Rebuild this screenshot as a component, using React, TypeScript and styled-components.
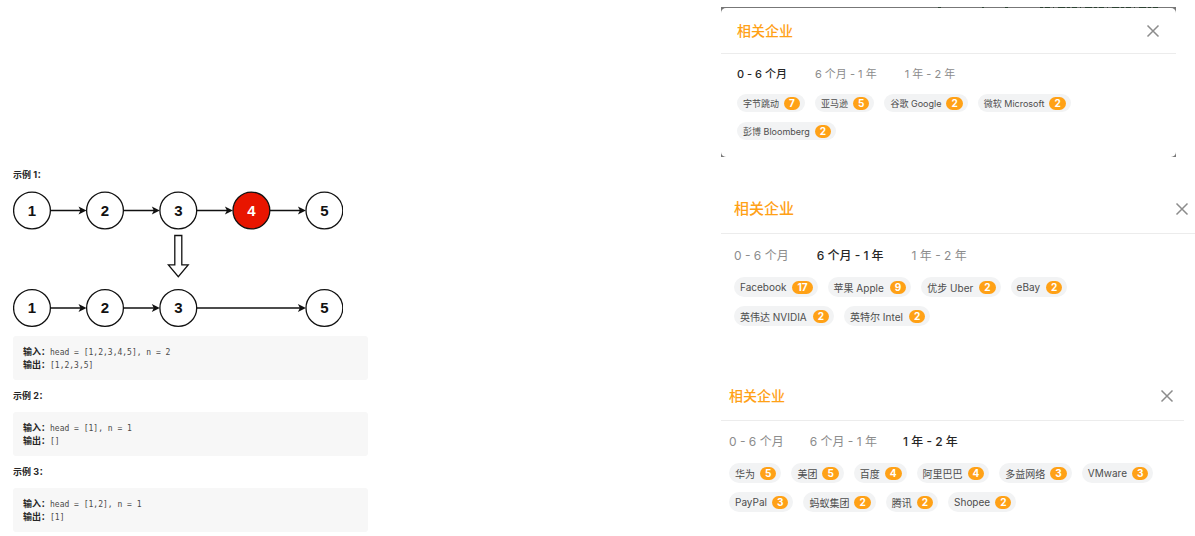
import React from "react";
import styled, { createGlobalStyle } from "styled-components";

const GlobalStyle = createGlobalStyle`
  * { box-sizing: border-box; }
  body {
    margin: 0;
    background: #fff;
    font-family: Inter, "Noto Sans CJK SC", sans-serif;
  }
  button { font: inherit; border: 0; background: none; padding: 0; cursor: pointer; }
`;

const Page = styled.main`
  display: flex;
  justify-content: space-between;
  align-items: flex-start;
`;

const Examples = styled.section`
  flex: 0 1 368px;
  padding: 168px 0 0 13px;
`;

const ExampleTitle = styled.h3`
  margin: 0;
  font-size: 9px;
  line-height: 14px;
  font-weight: 700;
  color: #262626;
`;

const Diagram = styled.svg`
  display: block;
  margin-top: 8px;
`;

const Code = styled.pre<{ $tight?: boolean }>`
  margin: ${(p) => (p.$tight ? "6px" : "9px")} 0 9px;
  padding: 10px 10px 8px;
  background: #f7f7f7;
  border-radius: 3px;
  color: #4a4a4a;
  font-family: "DejaVu Sans Mono", "Noto Sans CJK SC", monospace;
  font-size: 8px;
  line-height: 12px;
`;

const Label = styled.strong`
  font-family: "Noto Sans CJK SC", sans-serif;
  font-size: 9px;
  line-height: 12px;
  color: #262626;
`;

const Panels = styled.section`
  flex: 0 1 474px;
  padding-top: 7px;
`;

const Backdrop = styled.div`
  margin-right: 19px;
  background: #777;
`;

const Edge = styled.svg`
  display: block;
  width: 100%;
  height: 1px;
`;

const Panel = styled.article<{ $inset?: number; $top?: number; $card?: boolean }>`
  margin-right: ${(p) => p.$inset ?? 0}px;
  margin-top: ${(p) => p.$top ?? 0}px;
  background: #fff;
  border-radius: ${(p) => (p.$card ? "5px" : "0")};
  padding-bottom: ${(p) => (p.$card ? "17px" : "0")};
`;

const Header = styled.header<{ $left: number; $right: number; $height: number }>`
  display: flex;
  align-items: center;
  justify-content: space-between;
  height: ${(p) => p.$height}px;
  padding: 0 ${(p) => p.$right}px 0 ${(p) => p.$left}px;
  border-bottom: 1px solid #ececec;
`;

const Title = styled.h2<{ $size: number }>`
  margin: 0;
  font-size: ${(p) => p.$size}px;
  line-height: 20px;
  font-weight: 500;
  color: #ffa116;
`;

const Close = styled.button`
  display: flex;
  color: #8c8c8c;
`;

const Tabs = styled.nav<{ $left: number; $gap: number; $size: number; $top: number }>`
  display: flex;
  gap: ${(p) => p.$gap}px;
  padding: ${(p) => p.$top}px 0 0 ${(p) => p.$left}px;
  font-size: ${(p) => p.$size}px;
`;

const Tab = styled.button<{ $active: boolean }>`
  line-height: 18px;
  white-space: nowrap;
  color: ${(p) => (p.$active ? "#262626" : "#8c8c8c")};
  font-weight: ${(p) => (p.$active ? 500 : 400)};
`;

const Tags = styled.ul<{ $left: number; $gap: number; $top: number }>`
  display: flex;
  flex-wrap: wrap;
  gap: ${(p) => p.$gap}px 10px;
  list-style: none;
  margin: ${(p) => p.$top}px 0 0;
  padding: 0 24px 0 ${(p) => p.$left}px;
`;

const Tag = styled.li<{ $height: number; $size: number; $gap: number }>`
  display: flex;
  align-items: center;
  gap: ${(p) => p.$gap}px;
  height: ${(p) => p.$height}px;
  padding: 0 5px 0 6px;
  border-radius: 10px;
  background: #f2f3f4;
  color: #4d4d4d;
  font-size: ${(p) => p.$size}px;
  white-space: nowrap;
`;

const Count = styled.span`
  min-width: 16px;
  padding: 0 5px;
  border-radius: 7px;
  background: #ffa116;
  color: #fff;
  font-size: 10px;
  line-height: 13px;
  font-weight: 700;
  text-align: center;
`;

const periods = ["0 - 6 个月", "6 个月 - 1 年", "1 年 - 2 年"];

type Company = [string, number];

interface PanelData {
  active: number;
  left: number;
  right: number;
  header: number;
  title: number;
  tabSize: number;
  tabGap: number;
  tabsTop: number;
  tagsTop: number;
  tagSize: number;
  tagGap: number;
  tagHeight: number;
  rowGap: number;
  companies: Company[];
}

const recent: PanelData = {
  active: 0, left: 16, right: 16, header: 46, title: 14, tabSize: 11, tabGap: 28,
  tabsTop: 11, tagsTop: 11, tagSize: 9, tagGap: 5, tagHeight: 18, rowGap: 10,
  companies: [["字节跳动", 7], ["亚马逊", 5], ["谷歌 Google", 2], ["微软 Microsoft", 2], ["彭博 Bloomberg", 2]],
};

const middle: PanelData = {
  active: 1, left: 13, right: 6, header: 50, title: 15, tabSize: 12, tabGap: 28,
  tabsTop: 13, tagsTop: 12, tagSize: 10, tagGap: 6, tagHeight: 20, rowGap: 9,
  companies: [["Facebook", 17], ["苹果 Apple", 9], ["优步 Uber", 2], ["eBay", 2], ["英伟达 NVIDIA", 2], ["英特尔 Intel", 2]],
};

const oldest: PanelData = {
  active: 2, left: 8, right: 10, header: 50, title: 14, tabSize: 12, tabGap: 26,
  tabsTop: 12, tagsTop: 12, tagSize: 10, tagGap: 5, tagHeight: 20, rowGap: 9,
  companies: [
    ["华为", 5], ["美团", 5], ["百度", 4], ["阿里巴巴", 4], ["多益网络", 3], ["VMware", 3],
    ["PayPal", 3], ["蚂蚁集团", 2], ["腾讯", 2], ["Shopee", 2],
  ],
};

function PanelBody({ data }: { data: PanelData }) {
  return (
    <>
      <Header $left={data.left} $right={data.right} $height={data.header}>
        <Title $size={data.title}>相关企业</Title>
        <Close aria-label="关闭">
          <svg width="14" height="14" viewBox="0 0 14 14" fill="none" stroke="currentColor" strokeWidth="1.5">
            <path d="M1.5 1.5 12.5 12.5M12.5 1.5 1.5 12.5" />
          </svg>
        </Close>
      </Header>
      <Tabs $left={data.left} $gap={data.tabGap} $size={data.tabSize} $top={data.tabsTop}>
        {periods.map((p, i) => (
          <Tab key={p} $active={i === data.active}>{p}</Tab>
        ))}
      </Tabs>
      <Tags $left={data.left} $gap={data.rowGap} $top={data.tagsTop}>
        {data.companies.map(([name, count]) => (
          <Tag key={name} $height={data.tagHeight} $size={data.tagSize} $gap={data.tagGap}>
            {name}
            <Count>{count}</Count>
          </Tag>
        ))}
      </Tags>
    </>
  );
}

function Node({ x, y, n, removed }: { x: number; y: number; n: number; removed?: boolean }) {
  return (
    <g>
      <circle cx={x} cy={y} r="18.4" fill={removed ? "#e81500" : "#fff"} stroke="#111" strokeWidth="1.3" />
      <text
        x={x}
        y={y + 5}
        textAnchor="middle"
        fontFamily="Liberation Sans, sans-serif"
        fontWeight="700"
        fontSize="15"
        fill={removed ? "#fff" : "#111"}
      >
        {n}
      </text>
    </g>
  );
}

function Link({ from, to, y }: { from: number; to: number; y: number }) {
  const tip = to - 18.5;
  return (
    <g>
      <path d={`M${from + 18.5} ${y}H${tip - 4}`} stroke="#111" strokeWidth="1.4" />
      <path d={`M${tip} ${y}l-8 -4 2 4 -2 4z`} fill="#111" />
    </g>
  );
}

const xs = [19, 92, 165.3, 238.4, 311.4];

function ListDiagram() {
  return (
    <Diagram width="330" height="140" viewBox="0 0 330 140" fill="none" role="img" aria-label="删除链表的倒数第 2 个结点">
      {[0, 1, 2, 3].map((i) => <Link key={i} from={xs[i]} to={xs[i + 1]} y={20.5} />)}
      {xs.map((x, i) => <Node key={i} x={x} y={20.5} n={i + 1} removed={i === 3} />)}
      <path d="M161.8 45.5h7v29.3h6.4l-9.9 11.9 -9.9-11.9h6.4z" stroke="#111" strokeWidth="1.3" />
      <Link from={xs[0]} to={xs[1]} y={118} />
      <Link from={xs[1]} to={xs[2]} y={118} />
      <Link from={xs[2]} to={xs[4]} y={118} />
      {[0, 1, 2, 4].map((i) => <Node key={i} x={xs[i]} y={118} n={i + 1} />)}
    </Diagram>
  );
}

function Sample({ input, output, tight }: { input: string; output: string; tight?: boolean }) {
  return (
    <Code $tight={tight}>
      <Label>输入：</Label>{input}{"\n"}
      <Label>输出：</Label>{output}
    </Code>
  );
}

export default function App() {
  return (
    <>
      <GlobalStyle />
      <Page>
        <Examples>
          <ExampleTitle>示例 1：</ExampleTitle>
          <ListDiagram />
          <Sample tight input="head = [1,2,3,4,5], n = 2" output="[1,2,3,5]" />
          <ExampleTitle>示例 2：</ExampleTitle>
          <Sample input="head = [1], n = 1" output="[]" />
          <ExampleTitle>示例 3：</ExampleTitle>
          <Sample input="head = [1,2], n = 1" output="[1]" />
        </Examples>
        <Panels>
          <Backdrop>
            <Edge viewBox="0 0 455 1" preserveAspectRatio="none" aria-hidden="true">
              <path
                d="M217 .5h4M261 .5h2M284 .5h3M319 .5h121"
                stroke="#2c4232"
                strokeDasharray="3 2 5 3 1 4 7 2"
              />
            </Edge>
            <Panel $card><PanelBody data={recent} /></Panel>
          </Backdrop>
          <Panel $top={27}><PanelBody data={middle} /></Panel>
          <Panel $top={45} $inset={11}><PanelBody data={oldest} /></Panel>
        </Panels>
      </Page>
    </>
  );
}
